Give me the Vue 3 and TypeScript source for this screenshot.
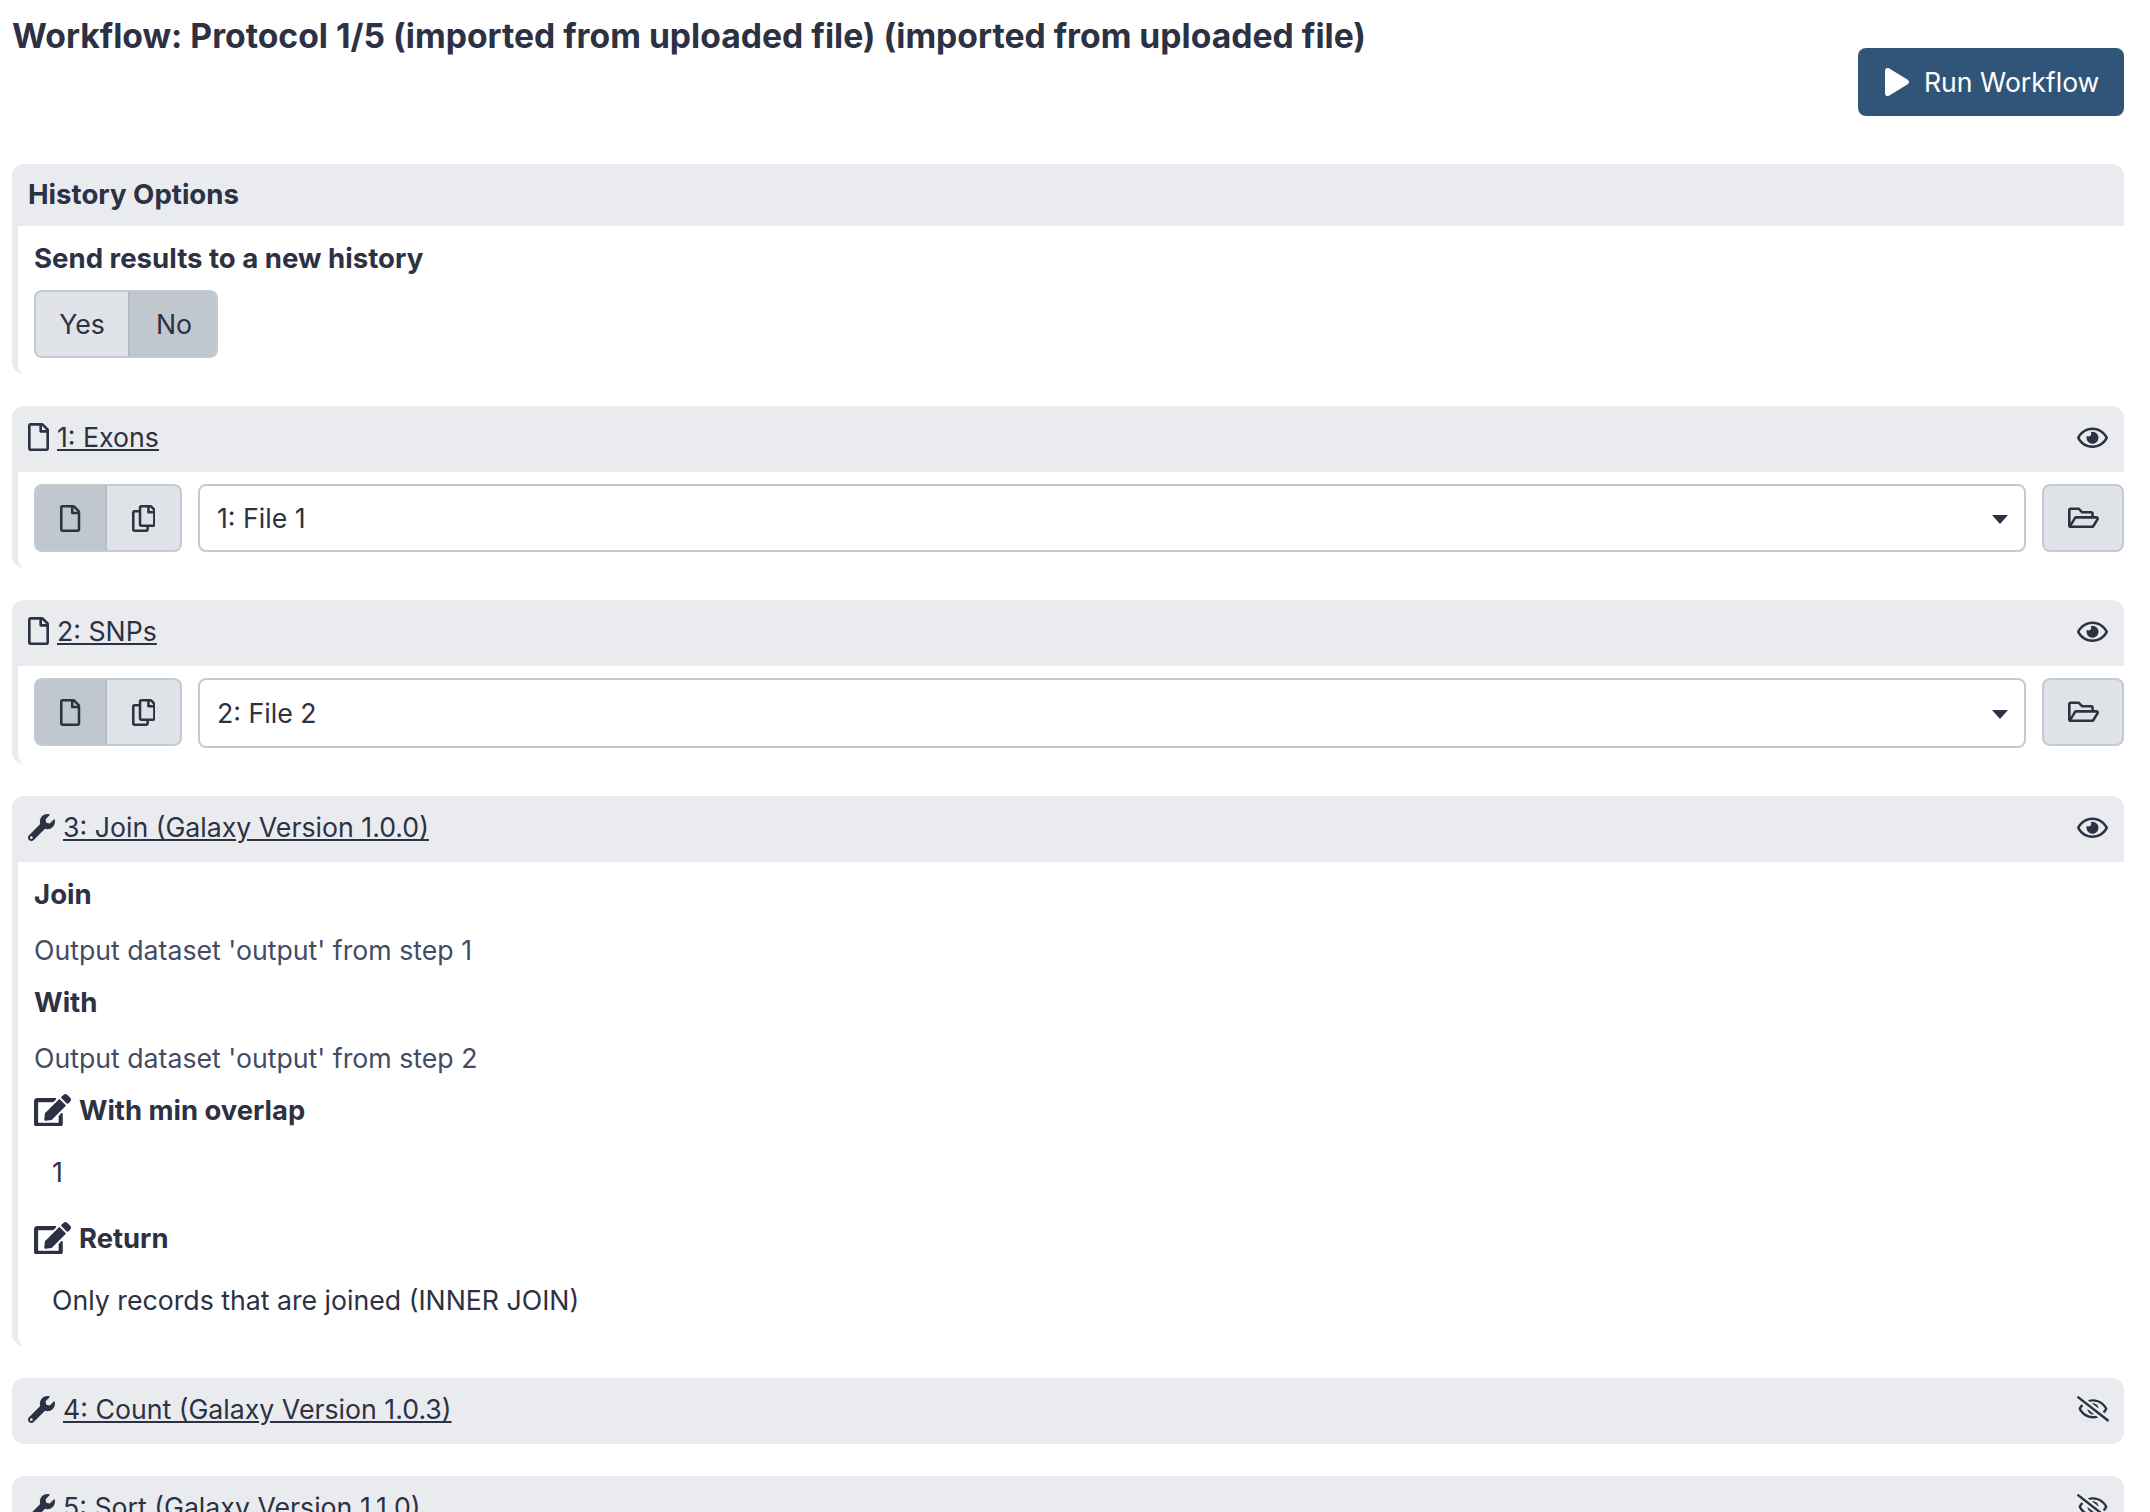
<script setup lang="ts">
const P = {
  file: 'M369.9 97.9L286 14C277 5 264.8-.1 252.1-.1H48C21.5 0 0 21.5 0 48v416c0 26.5 21.5 48 48 48h288c26.5 0 48-21.5 48-48V131.9c0-12.7-5.1-25-14.1-34zM332.1 128H256V51.9l76.1 76.1zM48 464V48h160v104c0 13.3 10.7 24 24 24h104v288H48z',
  copy: 'M433.941 65.941l-51.882-51.882A48 48 0 0 0 348.118 0H176c-26.51 0-48 21.49-48 48v48H48c-26.51 0-48 21.49-48 48v320c0 26.51 21.49 48 48 48h224c26.51 0 48-21.49 48-48v-48h80c26.51 0 48-21.49 48-48V99.882a48 48 0 0 0-14.059-33.941zM266 464H54a6 6 0 0 1-6-6V150a6 6 0 0 1 6-6h74v224c0 26.51 21.49 48 48 48h96v42a6 6 0 0 1-6 6zm128-96H182a6 6 0 0 1-6-6V54a6 6 0 0 1 6-6h106v88c0 13.255 10.745 24 24 24h88v202a6 6 0 0 1-6 6zm6-256h-64V48h9.632c1.591 0 3.117.632 4.243 1.757l48.368 48.368a6 6 0 0 1 1.757 4.243V112z',
  wrench: 'M507.73 109.1c-2.24-9.03-13.54-12.09-20.12-5.51l-74.36 74.36-67.88-11.31-11.31-67.88 74.36-74.36c6.62-6.62 3.43-17.9-5.66-20.16-47.38-11.74-99.55.91-136.58 37.93-39.64 39.64-50.55 97.1-34.05 147.2L18.74 402.76c-24.99 24.99-24.99 65.51 0 90.5 24.99 24.99 65.51 24.99 90.5 0l213.21-213.21c50.12 16.71 107.47 5.68 147.37-34.22 37.07-37.07 49.7-89.32 37.91-136.73zM64 472c-13.25 0-24-10.75-24-24 0-13.26 10.75-24 24-24s24 10.74 24 24c0 13.25-10.75 24-24 24z',
  eye: 'M288 144a110.94 110.94 0 0 0-31.24 5 55.4 55.4 0 0 1 7.24 27 56 56 0 0 1-56 56 55.4 55.4 0 0 1-27-7.24A111.71 111.71 0 1 0 288 144zm284.52 97.4C518.29 135.59 410.93 64 288 64S57.68 135.64 3.48 241.41a32.35 32.35 0 0 0 0 29.19C57.71 376.41 165.07 448 288 448s230.32-71.64 284.52-177.41a32.35 32.35 0 0 0 0-29.19zM288 400c-98.65 0-189.09-55-237.93-144C98.91 167 189.34 112 288 112s189.09 55 237.93 144C477.1 345 386.66 400 288 400z',
  slash: 'M634 471L36 3.51A16 16 0 0 0 13.51 6l-10 12.49A16 16 0 0 0 6 41l598 467.49a16 16 0 0 0 22.49-2.49l10-12.49A16 16 0 0 0 634 471zM296.79 146.47l134.79 105.38C429.36 191.91 380.48 144 320 144a112.26 112.26 0 0 0-23.21 2.47zm46.42 219.07L208.42 260.16C210.65 320.09 259.53 368 320 368a113 113 0 0 0 23.21-2.46zM320 112c98.65 0 189.09 55 237.93 144a285.53 285.53 0 0 1-44 60.2l37.74 29.5a333.7 333.7 0 0 0 52.9-75.11 32.35 32.35 0 0 0 0-29.19C550.29 135.59 442.93 64 320 64c-36.7 0-71.71 7-104.63 18.81l46.41 36.29c18.94-4.3 38.34-7.1 58.22-7.1zm0 288c-98.65 0-189.08-55-237.93-144a285.47 285.47 0 0 1 44.05-60.19l-37.74-29.5a333.6 333.6 0 0 0-52.89 75.1 32.35 32.35 0 0 0 0 29.19C89.72 376.41 197.08 448 320 448c36.7 0 71.71-7.05 104.63-18.81l-46.41-36.28C359.28 397.2 339.89 400 320 400z',
  folder: 'M527.9 224H480v-48c0-26.5-21.5-48-48-48H272l-64-64H48C21.5 64 0 85.5 0 112v288c0 26.5 21.5 48 48 48h400c16.5 0 31.9-8.5 40.7-22.6l79.9-128c20-31.9-3-73.4-40.7-73.4zM48 118c0-3.3 2.7-6 6-6h134.1l64 64H426c3.3 0 6 2.7 6 6v42H152c-16.8 0-32.4 8.8-41.1 23.2L48 351.4zm400 282H72l77.2-128H528z',
  edit: 'M402.6 83.2l90.2 90.2c3.8 3.8 3.8 10 0 13.8L274.4 405.6l-92.8 10.3c-12.4 1.4-22.9-9.1-21.5-21.5l10.3-92.8L388.8 83.2c3.8-3.8 10-3.8 13.8 0zm162-22.9l-48.8-48.8c-15.2-15.2-39.9-15.2-55.2 0l-35.4 35.4c-3.8 3.8-3.8 10 0 13.8l90.2 90.2c3.8 3.8 10 3.8 13.8 0l35.4-35.4c15.2-15.3 15.2-40 0-55.2zM384 346.2V448H64V128h229.8c3.2 0 6.2-1.3 8.5-3.5l40-40c7.6-7.6 2.2-20.5-8.5-20.5H48C21.5 64 0 85.5 0 112v352c0 26.5 21.5 48 48 48h352c26.5 0 48-21.5 48-48V306.2c0-10.7-12.9-16-20.5-8.5l-40 40c-2.2 2.3-3.5 5.3-3.5 8.5z',
  play: 'M424.4 214.7L72.4 6.6C43.8-10.3 0 6.1 0 47.9V464c0 37.5 40.7 60.1 72.4 41.3l352-208c31.4-18.5 31.5-64.1 0-82.6z',
}
const inputs = [
  { title: '1: Exons', value: '1: File 1', tall: false },
  { title: '2: SNPs', value: '2: File 2', tall: true },
]
const joinRows = [
  { label: 'Join', value: "Output dataset 'output' from step 1" },
  { label: 'With', value: "Output dataset 'output' from step 2" },
]
const editRows = [
  { label: 'With min overlap', value: '1' },
  { label: 'Return', value: 'Only records that are joined (INNER JOIN)' },
]
const collapsed = ['4: Count (Galaxy Version 1.0.3)', '5: Sort (Galaxy Version 1.1.0)']
</script>

<template>
  <div class="page">
    <div class="top">
      <h1 class="title">Workflow: Protocol 1/5 (imported from uploaded file) (imported from uploaded file)</h1>
      <button class="run">
        <svg class="play" viewBox="0 0 448 512" preserveAspectRatio="none"><path :d="P.play" /></svg>
        Run Workflow
      </button>
    </div>

    <section class="card">
      <header class="head history-head"><b>History Options</b></header>
      <div class="body history-body">
        <div class="label">Send results to a new history</div>
        <div class="toggle">
          <span class="seg yes">Yes</span>
          <span class="seg no active">No</span>
        </div>
      </div>
    </section>

    <section v-for="item in inputs" :key="item.title" class="card">
      <header class="head">
        <svg class="hicon file" viewBox="0 0 384 512"><path :d="P.file" /></svg>
        <a class="link">{{ item.title }}</a>
        <svg class="eye" viewBox="0 0 576 512"><path :d="P.eye" /></svg>
      </header>
      <div class="body input-body">
        <div class="toggle icons">
          <span class="seg ic active"><svg class="bicon" viewBox="0 0 384 512"><path :d="P.file" /></svg></span>
          <span class="seg ic2"><svg class="bicon" viewBox="0 0 448 512"><path :d="P.copy" /></svg></span>
        </div>
        <div class="select" :class="{ tall: item.tall }">
          <span>{{ item.value }}</span>
          <i class="caret"></i>
        </div>
        <button class="browse"><svg class="fold" viewBox="0 0 576 512"><path :d="P.folder" /></svg></button>
      </div>
    </section>

    <section class="card">
      <header class="head">
        <svg class="hicon wrench" viewBox="0 0 512 512"><path :d="P.wrench" /></svg>
        <a class="link">3: Join (Galaxy Version 1.0.0)</a>
        <svg class="eye" viewBox="0 0 576 512"><path :d="P.eye" /></svg>
      </header>
      <div class="body join-body">
        <template v-for="r in joinRows" :key="r.label">
          <div class="label plain">{{ r.label }}</div>
          <div class="output">{{ r.value }}</div>
        </template>
        <template v-for="r in editRows" :key="r.label">
          <div class="label edit-label">
            <svg class="edit" viewBox="0 0 576 512"><path :d="P.edit" /></svg>
            {{ r.label }}
          </div>
          <div class="val">{{ r.value }}</div>
        </template>
      </div>
    </section>

    <section v-for="t in collapsed" :key="t" class="card closed">
      <header class="head">
        <svg class="hicon wrench" viewBox="0 0 512 512"><path :d="P.wrench" /></svg>
        <a class="link">{{ t }}</a>
        <svg class="eye slash" viewBox="0 0 640 512"><path :d="P.slash" /></svg>
      </header>
    </section>
  </div>
</template>

<style>
html, body { margin: 0; height: 1512px; overflow: hidden; background: #fff; }
</style>

<style scoped>
.page {
  box-sizing: border-box;
  height: 1512px;
  overflow: hidden;
  padding: 0 26px 0 12px;
  font-family: Inter, "Liberation Sans", sans-serif;
  font-size: 26.7px;
  color: #2c3143;
}
svg { display: block; fill: currentColor; flex: none; }
.top { display: flex; justify-content: space-between; align-items: flex-start; height: 164px; }
.title { margin: 16px 0 0; font-size: 33.7px; line-height: 40px; font-weight: 700; }
.run {
  display: flex; align-items: center; gap: 15px;
  box-sizing: border-box; width: 266px; height: 68px; margin-top: 48px; padding: 0 0 0 27px;
  background: #305578; color: #fff; border: 0; border-radius: 8px;
  font: inherit; font-size: 26.6px;
}
.play { width: 24px; height: 28px; }
.card {
  border-left: 6px solid #eaebef;
  border-radius: 12px;
  margin-bottom: 32px;
}
.closed { border-left: 0; }
.head {
  display: flex; align-items: center;
  height: 66px; box-sizing: border-box; padding: 0 16px 4px 16px; margin-left: -6px;
  background: #eaebef;
  border-radius: 12px 12px 0 0;
}
.closed .head { margin-left: 0; border-radius: 12px; }
.history-head { height: 62px; padding-bottom: 2px; font-size: 27.6px; }
.body { padding-left: 16px; }
.history-body { padding-top: 12px; padding-bottom: 16px; }
.label { font-weight: 700; font-size: 27.6px; line-height: 40px; }
.toggle { display: inline-flex; height: 68px; margin-top: 12px; }
.seg {
  display: flex; align-items: center; justify-content: center;
  box-sizing: border-box; background: #dfe2e7; border: 2px solid #c4cad4;
}
.yes { width: 94px; border-radius: 8px 0 0 8px; border-right: 0; }
.no { width: 90px; padding-left: 2px; border-radius: 0 8px 8px 0; border-left: 0; }
.active { background: #c1c7cf; }
.no.active { border-left: 2px solid #b5bcc5; }
.ic { width: 73px; border-radius: 8px 0 0 8px; border-right: 2px solid #b5bcc5; }
.ic2 { width: 75px; border-radius: 0 8px 8px 0; border-left: 0; }
.input-body { display: flex; align-items: flex-start; gap: 16px; padding-top: 12px; padding-bottom: 16px; }
.icons { margin-top: 0; }
.bicon { height: 27px; }
.select {
  flex: 1; display: flex; align-items: center; justify-content: space-between;
  box-sizing: border-box; height: 68px; padding: 0 16px 0 17px;
  background: #fff; border: 2px solid #c4cad4; border-radius: 8px;
}
.select.tall { height: 70px; }
.caret { width: 0; height: 0; margin-top: 2px; border: 8px solid transparent; border-top: 9px solid #2c3143; border-bottom: 0; }
.browse {
  display: flex; align-items: center; justify-content: center;
  box-sizing: border-box; width: 82px; height: 68px; padding: 0;
  background: #dfe2e7; border: 2px solid #c4cad4; border-radius: 8px; color: #2c3143;
}
.fold { width: 31px; }
.hicon { margin-right: 8px; }
.file { height: 28px; }
.wrench { height: 27px; margin-right: 8px; }
.link { text-decoration: underline; }
.eye { margin-left: auto; margin-top: 2px; width: 31px; }
.slash { width: 32px; margin-top: 0; margin-right: -1px; }
.join-body { padding-top: 12px; padding-bottom: 0; height: 484px; box-sizing: border-box; }
.plain { line-height: 40px; }
.output { color: #414c66; line-height: 40px; margin: 16px 0 12px; }
.edit-label { display: flex; align-items: center; gap: 8px; font-size: 27.4px; }
.edit { width: 37px; }
.val { padding-left: 18px; line-height: 40px; margin: 22px 0 26px; }
</style>
